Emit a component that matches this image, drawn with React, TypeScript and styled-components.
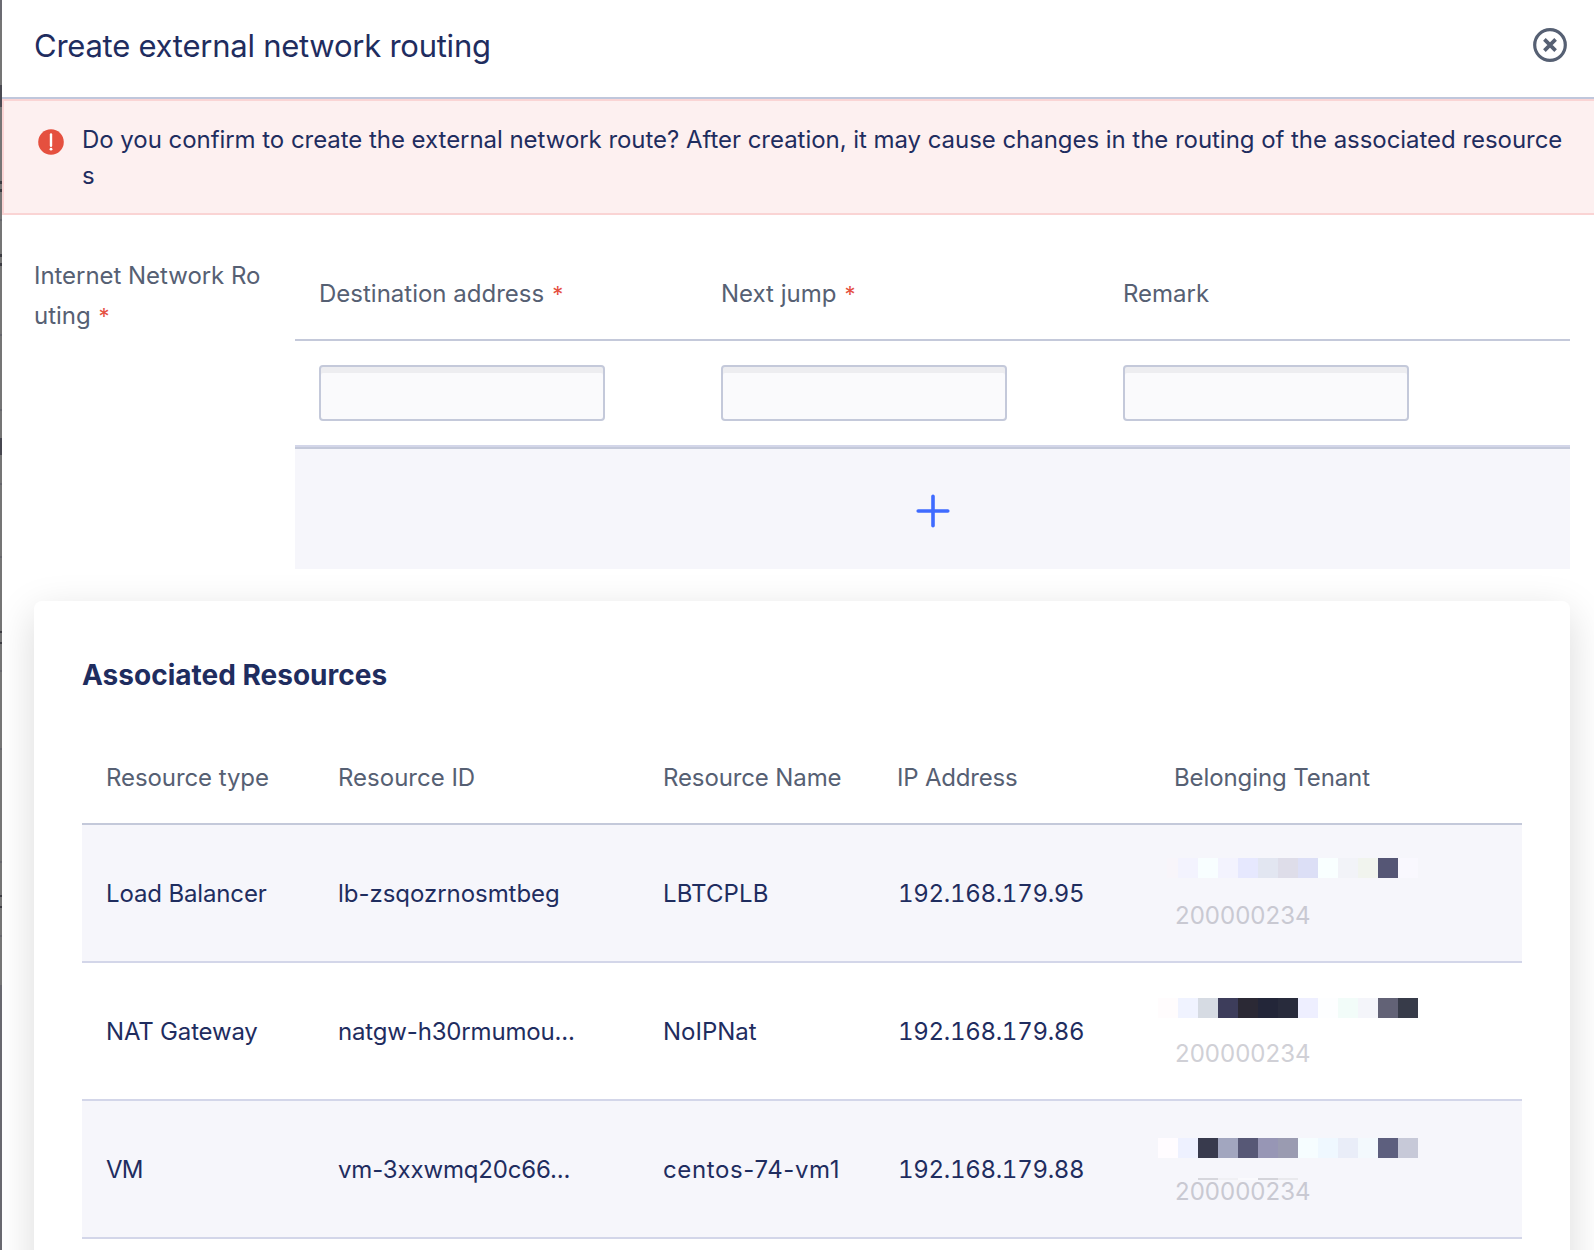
import React from 'react';
import styled, { createGlobalStyle } from 'styled-components';

const ink = '#1f2d5f';
const muted = '#566073';
const line = '#c4c9da';
const softLine = '#d3d6e9';
const stripe = '#f6f6fb';
const danger = '#e5503f';

const GlobalStyle = createGlobalStyle`
  * { box-sizing: border-box; }
  html, body { margin: 0; padding: 0; }
  body {
    background: #fff;
    color: ${ink};
    font-family: Inter, "Liberation Sans", sans-serif;
    font-size: 24px;
    line-height: 36px;
    overflow: hidden;
  }
`;

/* Sliver of the dimmed page that stays visible left of the drawer */
const marks: [number, number, string][] = [
  [0, 20, '#6b6b72'],
  [85, 107, '#4a4a52'],
  [181, 184, '#3c3c42'],
  [189, 192, '#3c3c42'],
  [219, 221, '#66666c'],
  [254, 257, '#3c3c42'],
  [263, 266, '#3c3c42'],
  [334, 336, '#66666c'],
  [409, 411, '#66666c'],
  [438, 455, '#46464f'],
  [483, 485, '#66666c'],
  [556, 558, '#66666c'],
  [631, 633, '#3c3c42'],
  [642, 644, '#3c3c42'],
  [670, 672, '#66666c'],
  [748, 750, '#66666c'],
  [861, 863, '#66666c'],
  [895, 897, '#3c3c42'],
  [906, 908, '#3c3c42'],
  [935, 937, '#66666c'],
  [985, 1250, '#68686f'],
];

const stops = marks
  .map(([from, to, color]) => `#757575 ${from}px, ${color} ${from}px, ${color} ${to}px, #757575 ${to}px`)
  .join(', ');

const Screen = styled.div`
  display: flex;
  width: 1594px;
  height: 1250px;
  overflow: hidden;
`;

const Backdrop = styled.div`
  flex: 0 0 2px;
  background: linear-gradient(to bottom, ${stops});
`;

const Drawer = styled.main`
  flex: 1;
  min-width: 0;
  display: flex;
  flex-direction: column;
  background: #fff;
  overflow: hidden;
`;

const Header = styled.header`
  flex: none;
  height: 99px;
  display: flex;
  align-items: center;
  justify-content: space-between;
  padding: 0 27px 7px 32px;
  border-bottom: 2px solid #c0c7dc;
`;

const Title = styled.h1`
  margin: 0;
  padding-top: 2px;
  font-size: 31px;
  font-weight: 400;
  line-height: 40px;
  letter-spacing: -0.25px;
`;

const IconButton = styled.button`
  display: flex;
  padding: 0;
  border: 0;
  background: none;
  color: ${muted};
`;

const Alert = styled.section`
  flex: none;
  display: flex;
  gap: 18px;
  width: 1600px;
  padding: 21px 0 19px 34px;
  background: #fdf0f0;
  border: 2px solid #fad4d4;
`;

const AlertIcon = styled.svg`
  flex: none;
  margin-top: 7px;
`;

const AlertText = styled.p`
  margin: 0;
  width: 1488px;
  letter-spacing: -0.045px;
  word-break: break-all;
`;

const Body = styled.div`
  flex: none;
  display: flex;
  flex-direction: column;
  gap: 32px;
  padding: 40px 24px 0 32px;
`;

const Field = styled.div`
  display: flex;
`;

const FieldLabel = styled.div`
  flex: none;
  width: 261px;
  padding: 1px 30px 0 0;
  line-height: 40px;
  letter-spacing: -0.04px;
  color: ${muted};
  word-break: break-all;
`;

const Star = styled.span`
  margin-left: 8px;
  color: ${danger};
  font-size: 22px;
  line-height: 1;
`;

const RouteTable = styled.div`
  flex: 1;
  display: flex;
  flex-direction: column;
`;

const RouteRow = styled.div<{ $head?: boolean }>`
  display: grid;
  grid-template-columns: 402px 402px 402px 1fr;
  border-bottom: 2px solid ${(p) => (p.$head ? line : softLine)};
  color: ${muted};
`;

const RouteCell = styled.div<{ $head?: boolean }>`
  padding: ${(p) => (p.$head ? '21px 24px 27px' : '24px')};
`;

const Input = styled.input`
  display: block;
  width: 286px;
  height: 56px;
  padding: 0 16px;
  border: 2px solid ${line};
  border-radius: 4px;
  background: #fafafc;
  box-shadow: inset 0 6px 0 #ededf0;
  font: inherit;
  color: ${ink};
  outline: none;
`;

const AddRow = styled.button`
  display: flex;
  align-items: center;
  justify-content: center;
  height: 122px;
  padding: 3px 0 0;
  border: 0;
  border-top: 2px solid ${line};
  background: ${stripe};
  color: #3f6bff;
`;

const Card = styled.section`
  height: 700px;
  padding: 48px;
  border-radius: 8px;
  background: #fff;
  box-shadow: 0 12px 40px rgba(0, 0, 0, 0.15);
`;

const CardTitle = styled.h2`
  margin: 0 0 38px;
  font-size: 28px;
  font-weight: 700;
  line-height: 52px;
  letter-spacing: 0.01px;
`;

const columns = '232px 325px 234px 277px 1fr';

const TableHead = styled.div`
  display: grid;
  grid-template-columns: ${columns};
  border-bottom: 2px solid ${line};
  color: ${muted};
`;

const HeadCell = styled.div<{ $spacing?: number }>`
  padding: 21px 0 27px 24px;
  letter-spacing: ${(p) => p.$spacing ?? 0}px;
  white-space: nowrap;
`;

const TableRow = styled.div<{ $striped?: boolean }>`
  display: grid;
  grid-template-columns: ${columns};
  height: 138px;
  border-bottom: 2px solid ${softLine};
  background: ${(p) => (p.$striped ? stripe : '#fff')};
`;

const Cell = styled.div<{ $spacing?: number }>`
  padding: 51px 0 0 24px;
  letter-spacing: ${(p) => p.$spacing ?? 0}px;
  white-space: nowrap;
`;

const AddressCell = styled(Cell)`
  padding-left: 25px;
  letter-spacing: -0.3px;
  font-variant-numeric: tabular-nums;
`;

const TenantCell = styled.div<{ $shift: number }>`
  display: flex;
  flex-direction: column;
  padding-top: ${(p) => 33 + p.$shift}px;
`;

const Mosaic = styled.div`
  display: flex;
  margin-left: 8px;
`;

const Tile = styled.span<{ $color: string; $height?: number }>`
  width: 20px;
  height: ${(p) => p.$height ?? 20}px;
  background: ${(p) => p.$color};
`;

const TenantId = styled.div<{ $shift: number; $striped?: boolean }>`
  margin-top: ${(p) => 20 - p.$shift}px;
  padding-left: 25px;
  letter-spacing: 0.03px;
  color: ${(p) => (p.$striped ? '#c9c9d2' : '#d0d0d6')};
`;

const Trace = styled(Mosaic)`
  margin-top: 20px;
  margin-bottom: -22px;
`;

interface Resource {
  type: string;
  id: string;
  name: string;
  ip: string;
  tenant: string;
  tiles: string[];
  trace?: string[];
  shift: number;
  spacing: [number, number, number];
}

const resources: Resource[] = [
  {
    type: 'Load Balancer', id: 'lb-zsqozrnosmtbeg', name: 'LBTCPLB', ip: '192.168.179.95', tenant: '200000234',
    tiles: ['linear-gradient(to right, transparent 9px, #f8f5fa 9px)', '#f3f3fe', '#f8feff', '#f3f3fe', '#e6e8fe', '#e2e6f1', '#dedde9', '#dcdff6', '#f9ffff', '#f2f3f8', '#f1f4ee', '#555675', '#f9f8fe'],
    shift: 0, spacing: [-0.14, -0.04, 0.1],
  },
  {
    type: 'NAT Gateway', id: 'natgw-h30rmumou...', name: 'NoIPNat', ip: '192.168.179.86', tenant: '200000234',
    tiles: ['#fffcfd', '#f0f3ff', '#d6dbe3', '#3d3d5b', '#2b2935', '#232639', '#282b3c', '#eeefff', '#fdfeff', '#f2fcf9', '#f4f5fa', '#626276', '#373b49'],
    shift: 2, spacing: [-0.18, -0.17, 0],
  },
  {
    type: 'VM', id: 'vm-3xxwmq20c66...', name: 'centos-74-vm1', ip: '192.168.179.88', tenant: '200000234',
    tiles: ['#fffcff', '#eef1ff', '#383a4d', '#a2a6bf', '#575876', '#9796b5', '#9a9bb1', '#f6fdff', '#eff8ff', '#e9edf8', '#f3f9fd', '#5d5f7e', '#c7c9d8'],
    trace: ['transparent', 'transparent', '#d6d6dc', '#f0f0f4', '#fafafd', '#d4d4da', '#e9e9ed'],
    shift: 4, spacing: [-0.7, -0.15, 0.62],
  },
];

const CloseIcon = () => (
  <svg width="34" height="34" viewBox="0 0 34 34" fill="none" stroke="currentColor">
    <circle cx="17" cy="17" r="15.3" strokeWidth="3.2" />
    <path d="M11.4 11.4 22.6 22.6M22.6 11.4 11.4 22.6" strokeWidth="3.7" />
  </svg>
);

const PlusIcon = () => (
  <svg width="34" height="34" viewBox="0 0 34 34" fill="none" stroke="currentColor" strokeLinecap="round">
    <path d="M17 2.2V31.8M2.2 17H31.8" strokeWidth="3.6" />
  </svg>
);

export default function App() {
  return (
    <>
      <GlobalStyle />
      <Screen>
        <Backdrop />
        <Drawer>
          <Header>
            <Title>Create external network routing</Title>
            <IconButton aria-label="Close"><CloseIcon /></IconButton>
          </Header>
          <Alert>
            <AlertIcon width="26" height="26" viewBox="0 0 26 26">
              <circle cx="13" cy="13" r="12.8" fill={danger} />
              <path d="M13 5.4V16.8" stroke="#fff" strokeWidth="2.4" strokeLinecap="round" />
              <circle cx="13" cy="20.2" r="1.4" fill="#fff" />
            </AlertIcon>
            <AlertText>
              Do you confirm to create the external network route? After creation, it may cause changes in the routing of the associated resources
            </AlertText>
          </Alert>
          <Body>
            <Field>
              <FieldLabel>Internet Network Routing<Star>*</Star></FieldLabel>
              <RouteTable>
                <RouteRow $head>
                  <RouteCell $head>Destination address<Star>*</Star></RouteCell>
                  <RouteCell $head>Next jump<Star>*</Star></RouteCell>
                  <RouteCell $head>Remark</RouteCell>
                </RouteRow>
                <RouteRow>
                  <RouteCell><Input aria-label="Destination address" /></RouteCell>
                  <RouteCell><Input aria-label="Next jump" /></RouteCell>
                  <RouteCell><Input aria-label="Remark" /></RouteCell>
                </RouteRow>
                <AddRow aria-label="Add route"><PlusIcon /></AddRow>
              </RouteTable>
            </Field>
            <Card>
              <CardTitle>Associated Resources</CardTitle>
              <TableHead>
                <HeadCell $spacing={-0.08}>Resource type</HeadCell>
                <HeadCell>Resource ID</HeadCell>
                <HeadCell $spacing={-0.12}>Resource Name</HeadCell>
                <HeadCell $spacing={-0.2}>IP Address</HeadCell>
                <HeadCell $spacing={-0.1}>Belonging Tenant</HeadCell>
              </TableHead>
              {resources.map((r, i) => (
                <TableRow key={r.ip} $striped={i % 2 === 0}>
                  <Cell $spacing={r.spacing[0]}>{r.type}</Cell>
                  <Cell $spacing={r.spacing[1]}>{r.id}</Cell>
                  <Cell $spacing={r.spacing[2]}>{r.name}</Cell>
                  <AddressCell>{r.ip}</AddressCell>
                  <TenantCell $shift={r.shift}>
                    <Mosaic>{r.tiles.map((c, n) => <Tile key={n} $color={c} />)}</Mosaic>
                    {r.trace && <Trace>{r.trace.map((c, n) => <Tile key={n} $color={c} $height={2} />)}</Trace>}
                    <TenantId $shift={r.shift} $striped={i % 2 === 0}>{r.tenant}</TenantId>
                  </TenantCell>
                </TableRow>
              ))}
            </Card>
          </Body>
        </Drawer>
      </Screen>
    </>
  );
}
